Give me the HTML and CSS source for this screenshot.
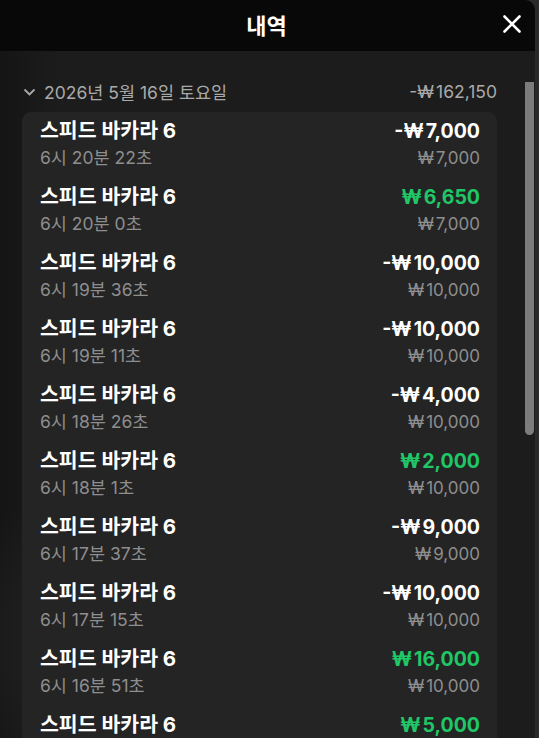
FILE: index.html
```html
<!DOCTYPE html>
<html lang="ko">
	<head>
		<meta charset="UTF-8">
		<title>내역</title>
		<link rel="stylesheet" href="styles.css">
	</head>
	<body>
		<div class="panel">
			<div class="header">
				<h1>내역</h1>
				<button type="button" class="close">
					<svg width="20" height="20" viewBox="0 0 20 20"><path d="M2.5 2.5L17.5 17.5M17.5 2.5L2.5 17.5" stroke="#fff" stroke-width="2.6" stroke-linecap="round"/></svg>
				</button>
			</div>
			<div class="body">
				<div class="list">
					<div class="day">
						<span class="date">
							<svg width="13" height="8" viewBox="0 0 13 8"><path d="M1.5 1.5L6.5 6.5L11.5 1.5" stroke="#a9a9a9" stroke-width="1.8" fill="none"/></svg>
							2026년 5월 16일 토요일
						</span>
						<span>-<i>₩</i>162,150</span>
					</div>
					<div class="card">
						<div class="row"><p class="game">스피드 바카라 6</p><p class="win">-<i>₩</i>7,000</p><p class="time">6시 20분 22초</p><p class="bet"><i>₩</i>7,000</p></div>
						<div class="row"><p class="game">스피드 바카라 6</p><p class="win plus"><i>₩</i>6,650</p><p class="time">6시 20분 0초</p><p class="bet"><i>₩</i>7,000</p></div>
						<div class="row"><p class="game">스피드 바카라 6</p><p class="win">-<i>₩</i>10,000</p><p class="time">6시 19분 36초</p><p class="bet"><i>₩</i>10,000</p></div>
						<div class="row"><p class="game">스피드 바카라 6</p><p class="win">-<i>₩</i>10,000</p><p class="time">6시 19분 11초</p><p class="bet"><i>₩</i>10,000</p></div>
						<div class="row"><p class="game">스피드 바카라 6</p><p class="win">-<i>₩</i>4,000</p><p class="time">6시 18분 26초</p><p class="bet"><i>₩</i>10,000</p></div>
						<div class="row"><p class="game">스피드 바카라 6</p><p class="win plus"><i>₩</i>2,000</p><p class="time">6시 18분 1초</p><p class="bet"><i>₩</i>10,000</p></div>
						<div class="row"><p class="game">스피드 바카라 6</p><p class="win">-<i>₩</i>9,000</p><p class="time">6시 17분 37초</p><p class="bet"><i>₩</i>9,000</p></div>
						<div class="row"><p class="game">스피드 바카라 6</p><p class="win">-<i>₩</i>10,000</p><p class="time">6시 17분 15초</p><p class="bet"><i>₩</i>10,000</p></div>
						<div class="row"><p class="game">스피드 바카라 6</p><p class="win plus"><i>₩</i>16,000</p><p class="time">6시 16분 51초</p><p class="bet"><i>₩</i>10,000</p></div>
						<div class="row"><p class="game">스피드 바카라 6</p><p class="win plus"><i>₩</i>5,000</p><p class="time">6시 16분 30초</p><p class="bet"><i>₩</i>5,000</p></div>
					</div>
				</div>
				<div class="rail"><div class="thumb"></div></div>
			</div>
		</div>
	</body>
</html>
```

FILE: styles.css
```css
*{
	margin: 0;
	padding: 0;
	box-sizing: border-box;
}
body{
	width: 539px;
	height: 738px;
	overflow: hidden;
	background: #2a2a2a;
	font-family: Inter, "Noto Sans CJK KR", sans-serif;
}
i{
	font-style: normal;
	margin-right: 2px;
}
.panel{
	width: 535px;
	height: 738px;
	border-top-right-radius: 10px;
	overflow: hidden;
	background: radial-gradient(ellipse 260px 160px at 170px 640px, #262626, transparent),
		linear-gradient(90deg, #151515 0, #1c1c1c 60px, #1c1c1c 100%);
}
.header{
	height: 51px;
	background: #080808;
	display: flex;
	align-items: center;
	justify-content: center;
	position: relative;
}
.header h1{
	color: #fff;
	font-size: 22px;
	font-weight: 700;
	margin-top: -4px;
	margin-left: -2px;
}
.close{
	position: absolute;
	right: 13px;
	top: 14px;
	background: none;
	border: 0;
	width: 20px;
	height: 20px;
}
.body{
	display: flex;
	height: 687px;
}
.list{
	width: 497px;
	padding-left: 22px;
}
.day{
	display: flex;
	justify-content: space-between;
	align-items: center;
	height: 61px;
	padding-top: 20px;
	color: #a9a9a9;
	font-size: 17.5px;
}
.date{
	display: flex;
	align-items: center;
	gap: 8px;
	padding-left: 1px;
}
.card{
	background: #242424;
	border-radius: 9px;
	padding: 6px 17px 0 18px;
}
.row{
	display: grid;
	grid-template-columns: 1fr auto;
	grid-template-rows: 26px 26px;
	row-gap: 1px;
	align-content: start;
	height: 66px;
}
.row p{
	line-height: 26px;
}
.game{
	color: #fff;
	font-size: 20.5px;
	font-weight: 700;
}
.win{
	color: #fff;
	font-size: 19.5px;
	font-weight: 700;
	text-align: right;
}
.win.plus{
	color: #1fc767;
}
.time, .bet{
	color: #8e8e8e;
	font-size: 17.5px;
}
.bet{
	text-align: right;
	font-size: 17px;
}
.rail{
	margin-left: 28px;
	padding-top: 31px;
}
.thumb{
	width: 9px;
	height: 353px;
	border-radius: 0 0 5px 5px;
	background: #7c7c7c;
}
```
